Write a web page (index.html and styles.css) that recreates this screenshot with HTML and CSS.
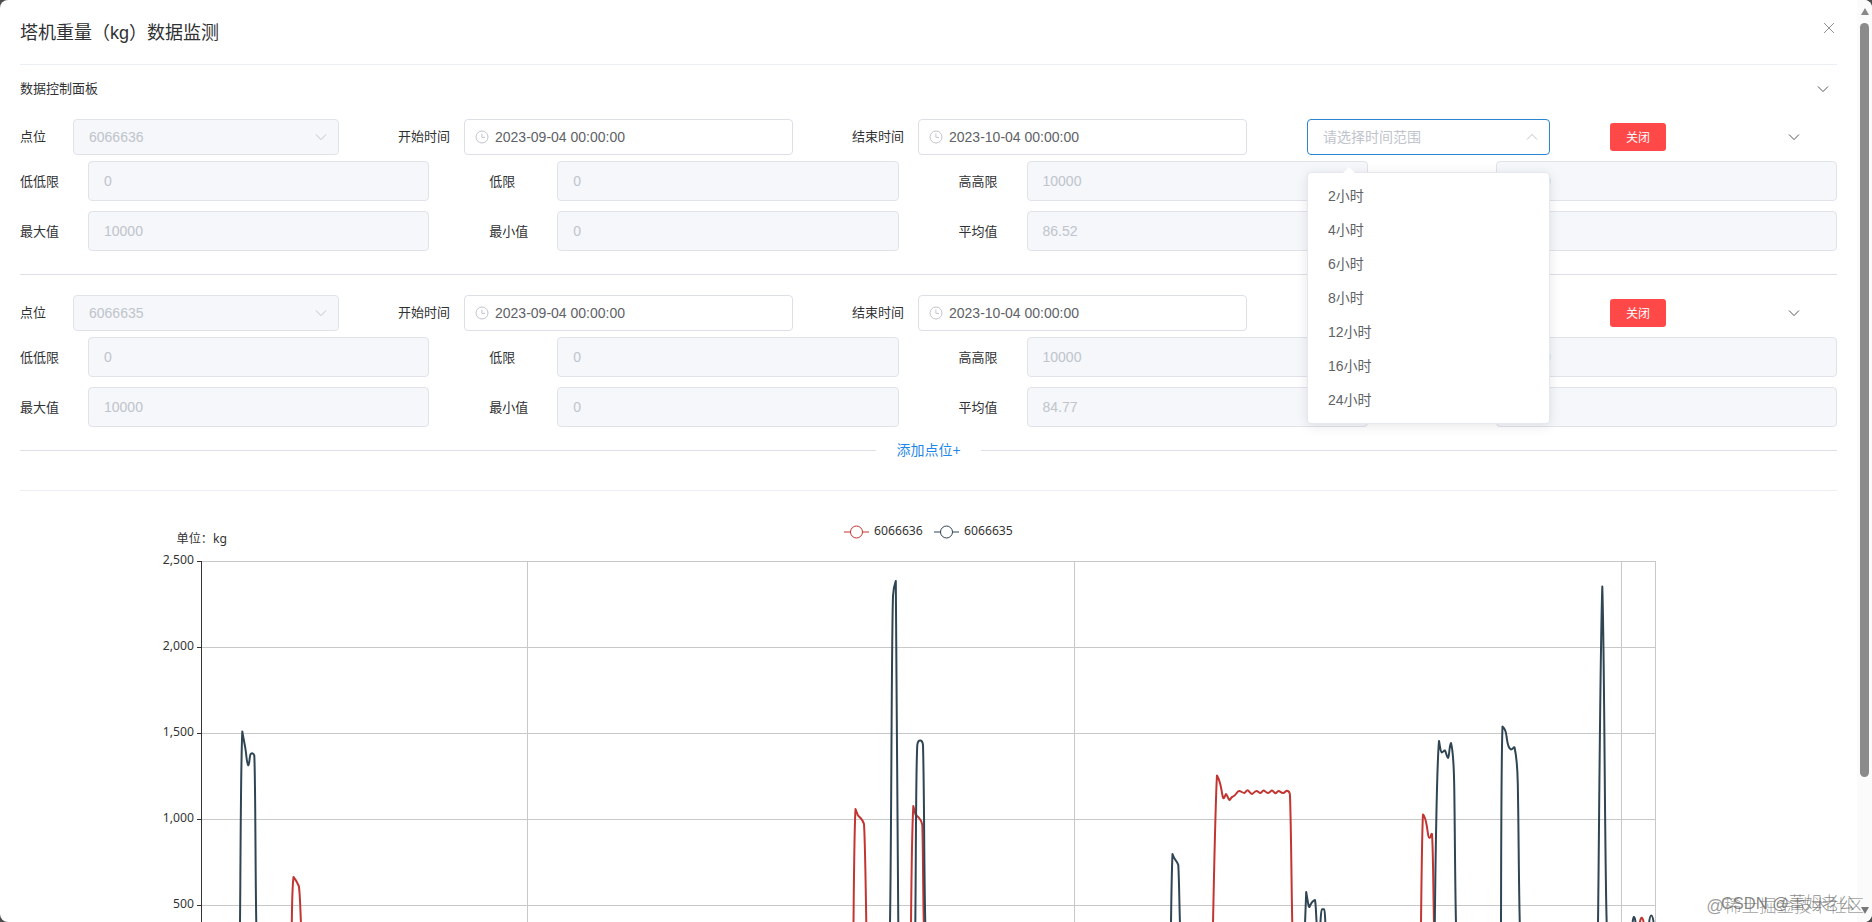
FILE: index.html
```html
<!DOCTYPE html>
<html lang="zh-CN">
  <head>
    <meta charset="UTF-8" />
    <title>塔机重量（kg）数据监测</title>
    <link rel="stylesheet" href="styles.css">
  </head>
  <body>
    <svg class="icon-defs" aria-hidden="true">
      <symbol id="arrow" viewBox="0 0 12 12"><path d="M1 3.5 L6 8.6 L11 3.5" /></symbol>
      <symbol id="clock" viewBox="0 0 14 14"><circle cx="7" cy="7" r="6" /><path d="M6.9 3.6 V7.4 H10" /></symbol>
      <symbol id="close" viewBox="0 0 12 12"><path d="M1 1 L11 11 M11 1 L1 11" /></symbol>
    </svg>
    <div class="dialog">
      <header class="dialog-header">
        <h1 class="dialog-title">塔机重量（kg）数据监测</h1>
        <svg class="icon icon-close"><use href="#close" /></svg>
      </header>

      <div class="panel-header">
        <span>数据控制面板</span>
        <svg class="icon icon-dark"><use href="#arrow" /></svg>
      </div>

      <section class="point">
        <div class="point-row">
          <label class="label-point">点位</label>
          <div class="field select-point disabled"><span>6066636</span><svg class="icon"><use href="#arrow" /></svg></div>
          <label class="label-time">开始时间</label>
          <div class="field date"><svg class="icon icon-clock"><use href="#clock" /></svg><span>2023-09-04 00:00:00</span></div>
          <label class="label-time">结束时间</label>
          <div class="field date"><svg class="icon icon-clock"><use href="#clock" /></svg><span>2023-10-04 00:00:00</span></div>
          <div class="range">
            <div class="field select-range active"><span>请选择时间范围</span><svg class="icon icon-up"><use href="#arrow" /></svg></div>
            <ul class="dropdown">
              <li>2小时</li>
              <li>4小时</li>
              <li>6小时</li>
              <li>8小时</li>
              <li>12小时</li>
              <li>16小时</li>
              <li>24小时</li>
            </ul>
          </div>
          <button type="button" class="btn-danger">关闭</button>
          <svg class="icon icon-dark icon-fold"><use href="#arrow" /></svg>
        </div>
        <div class="limits">
          <div class="limit"><label>低低限</label><div class="field disabled">0</div></div>
          <div class="limit"><label>低限</label><div class="field disabled">0</div></div>
          <div class="limit"><label>高高限</label><div class="field disabled">10000</div></div>
          <div class="limit"><label></label><div class="field disabled">10000</div></div>
          <div class="limit"><label>最大值</label><div class="field disabled">10000</div></div>
          <div class="limit"><label>最小值</label><div class="field disabled">0</div></div>
          <div class="limit"><label>平均值</label><div class="field disabled">86.52</div></div>
          <div class="limit"><label></label><div class="field disabled"></div></div>
        </div>
      </section>

      <div class="divider"></div>

      <section class="point">
        <div class="point-row">
          <label class="label-point">点位</label>
          <div class="field select-point disabled"><span>6066635</span><svg class="icon"><use href="#arrow" /></svg></div>
          <label class="label-time">开始时间</label>
          <div class="field date"><svg class="icon icon-clock"><use href="#clock" /></svg><span>2023-09-04 00:00:00</span></div>
          <label class="label-time">结束时间</label>
          <div class="field date"><svg class="icon icon-clock"><use href="#clock" /></svg><span>2023-10-04 00:00:00</span></div>
          <div class="range"></div>
          <button type="button" class="btn-danger">关闭</button>
          <svg class="icon icon-dark icon-fold"><use href="#arrow" /></svg>
        </div>
        <div class="limits">
          <div class="limit"><label>低低限</label><div class="field disabled">0</div></div>
          <div class="limit"><label>低限</label><div class="field disabled">0</div></div>
          <div class="limit"><label>高高限</label><div class="field disabled">10000</div></div>
          <div class="limit"><label></label><div class="field disabled">10000</div></div>
          <div class="limit"><label>最大值</label><div class="field disabled">10000</div></div>
          <div class="limit"><label>最小值</label><div class="field disabled">0</div></div>
          <div class="limit"><label>平均值</label><div class="field disabled">84.77</div></div>
          <div class="limit"><label></label><div class="field disabled"></div></div>
        </div>
      </section>

      <div class="add-point"><span>添加点位+</span></div>

      <svg class="chart" viewBox="20 491 1817 431">
        <!-- legend -->
        <g class="legend">
          <path class="red" d="M844 532 h25" />
          <circle class="red" cx="856.5" cy="532" r="6" />
          <text x="874" y="535">6066636</text>
          <path class="dark" d="M934 532 h25" />
          <circle class="dark" cx="946.5" cy="532" r="6" />
          <text x="964" y="535">6066635</text>
        </g>
        <text x="176.5" y="543">单位：kg</text>

        <!-- grid -->
        <path class="grid" d="M202 561.5 H1656 M202 647.5 H1656 M202 733.5 H1656 M202 819.5 H1656 M202 905.5 H1656" />
        <path class="grid" d="M527.5 561 V922 M1074.5 561 V922 M1621.5 561 V922 M1655.5 561 V922" />
        <path class="axis" d="M201.5 561 V922 M197 561.5 h5 M197 647.5 h5 M197 733.5 h5 M197 819.5 h5 M197 905.5 h5" />
        <g class="ticks">
          <text x="194" y="564">2,500</text>
          <text x="194" y="650">2,000</text>
          <text x="194" y="736">1,500</text>
          <text x="194" y="822">1,000</text>
          <text x="194" y="908">500</text>
        </g>

        <!-- 6066636 -->
        <g class="line red">
          <path d="M291.8 924 C292 905 292.5 885 293.5 877 C296 880 297.5 883 298.8 886 C300 892 300.3 910 301 924" />
          <path d="M853.5 924 C854 870 854.3 830 855.5 809 L858 815.5 C861 818 863 820 864 824 C865 840 865.8 890 866.3 924" />
          <path d="M911 924 C911.5 870 912 830 913.3 806 L915.5 814.5 C918 817 921 818 922.3 825 C923 840 923 890 923.8 924" />
          <path d="M1213 924 C1214.3 860 1215.5 800 1217 775.5 C1219 779 1220.5 784 1221.5 790 C1222.5 796 1223 799 1224 798 L1226 794 C1227 794 1228 799 1229.5 800 C1231 799 1231 797 1233 796.5 C1236 795.5 1237 791 1239 791 C1241 791 1242.5 793 1244.5 793 C1246 792 1246.5 790.3 1247.5 790.3 C1249 790.3 1250 794 1252 794 C1254 793 1255 791 1256.5 791 C1258 791 1259 793 1260.5 793 C1262 793 1262 790.5 1263.5 790.5 C1265 790.5 1266 793 1268 793 C1270 793 1270.5 790.5 1272 790.5 C1273.5 790.5 1274 793.5 1275.5 793.3 C1277 793 1277 791 1278.5 791 C1280 791 1281 793 1283 793 C1285 793 1285.5 790.5 1287 790.7 C1289 791 1290 793 1290 796 C1291.2 830 1291.5 890 1292.3 924" />
          <path d="M1421 924 C1421.5 880 1422 830 1423 814.5 C1425 816 1426 821 1427 827 C1428 834 1428.5 838 1429.5 838 C1431 838 1431 833 1432 834 C1433.2 850 1433.2 890 1434 924" />
          <path d="M1639.5 924 C1640.5 918.5 1641.5 917 1642.2 918 C1643 919 1643.5 921 1644 924" />
        </g>
        <!-- 6066635 -->
        <g class="line dark">
          <path d="M240 924 C240.7 850 240.7 765 242.3 731.5 C243.3 739 245 744 246 753 C246.7 760 247.6 764.5 248.3 765.3 C249.6 765 249.3 756 250.7 754 C251.8 753 253.6 753 254.3 755.5 C255.5 780 255.3 870 256.3 924" />
          <path d="M890 924 C891.5 830 891.5 640 893 596 C893.5 587 894.8 584 895.8 581 C897.3 640 896.8 840 898.3 924" />
          <path d="M915.3 924 C916 860 915.8 770 917.3 745 C918 739 922.3 739 923 745 C924.3 790 924 870 925.3 924" />
          <path d="M1171 924 C1171.3 900 1171.8 870 1172.5 854 C1174.5 861 1177 860 1178.3 865 C1179.3 885 1179.3 905 1180 924" />
          <path d="M1305 924 L1306.2 892 C1307.5 899 1308.5 908 1309.5 907 C1311 903 1312 901 1315 900 C1316 905 1316 915 1316.7 924 M1320.3 924 C1321 916 1321 909.5 1322 909.3 H1324 C1325 910 1325 917 1325.4 924" />
          <path d="M1434.8 924 C1435.5 860 1436.5 770 1439 741 C1440 746 1440.5 752 1441.8 752.5 C1443 752.5 1444 750 1445 750.5 C1446 752 1447 758 1448 758 C1449.5 757 1449 746 1451 743 C1453.5 752 1454 770 1454.3 790 C1455 840 1455 880 1456 924" />
          <path d="M1501 924 C1501.2 860 1501.2 760 1502.5 726.5 C1504.5 728 1506 731 1506.6 737 C1507.5 744 1509 749 1511 749.5 C1513 749.5 1513.5 746.5 1514.5 747.3 C1516 754 1517.5 768 1517.8 784 C1518.7 830 1518.7 880 1519.8 924" />
          <path d="M1598 924 C1599 850 1600 660 1602.3 586.5 C1604.6 660 1604.6 850 1606.7 924" />
          <path d="M1632.5 924 C1633 917 1634 915 1635 919 L1635.8 924 M1649 924 C1650 912.5 1652.5 912.5 1653.8 924" />
        </g>
      </svg>

      <div class="scrollbar"><i class="scroll-up"></i><i class="scroll-thumb"></i><i class="scroll-down"></i></div>
      <div class="watermark watermark-back">@稀土掘金技术社区</div>
      <div class="watermark watermark-front">CSDN @蕾姆老公</div>
    </div>
  </body>
</html>
```
FILE: styles.css
```css
:root {
  --primary: #1f87e8;
  --danger: #ff4949;
  --text: #303133;
  --text-regular: #606266;
  --placeholder: #c0c4cc;
  --border: #dcdfe6;
  --border-light: #ebeef5;
  --disabled-bg: #f5f7fa;
}

* {
  box-sizing: border-box;
}

body {
  margin: 0;
  height: 922px;
  overflow: hidden;
  background: #4d4d4d;
  color: var(--text);
  font-family: "Liberation Sans", "Noto Sans CJK SC", sans-serif;
  font-size: 13px;
}

.icon-defs {
  display: none;
}

.dialog {
  position: relative;
  height: 922px;
  padding: 0 35px 0 20px;
  overflow: hidden;
  background: #fff;
  border-radius: 8px;
}

.dialog-header {
  display: flex;
  justify-content: space-between;
  align-items: center;
  height: 65px;
  padding-right: 2px;
  border-bottom: 1px solid var(--border-light);
}

.dialog-title {
  margin: 0;
  padding-bottom: 3px;
  font-size: 18px;
  font-weight: 400;
}

.icon {
  width: 12px;
  height: 12px;
  flex: none;
  fill: none;
  stroke: var(--placeholder);
  stroke-width: 1;
}

.icon-close {
  margin-bottom: 9px;
  stroke: #909399;
}

.icon-dark {
  stroke: #55575b;
}

.icon-up {
  transform: rotate(180deg);
}

.icon-clock {
  width: 14px;
  height: 14px;
  margin-right: 6px;
}

.panel-header {
  display: flex;
  justify-content: space-between;
  align-items: center;
  height: 48px;
  padding-right: 8px;
}

.panel-header span {
  padding-bottom: 4px;
}

.point {
  padding-top: 6px;
}

.point-row {
  display: flex;
  align-items: center;
  height: 36px;
}

.point-row label {
  padding-bottom: 4px;
}

.label-point {
  width: 53px;
}

.label-time {
  width: 66px;
  margin-left: 59px;
}

.field {
  display: flex;
  align-items: center;
  height: 36px;
  padding: 0 15px;
  border: 1px solid var(--border);
  border-radius: 4px;
  color: var(--text-regular);
  font-size: 14px;
}

.disabled {
  background: var(--disabled-bg);
  border-color: #e0e3ea;
  color: var(--placeholder);
}

.select-point,
.select-range {
  justify-content: space-between;
  padding-right: 11px;
}

.select-point {
  width: 266px;
}

.date {
  width: 329px;
  padding: 0 10px;
}

.range {
  position: relative;
  width: 243px;
  margin-left: 60px;
}

.active {
  border-color: #2b85d0;
  color: var(--placeholder);
}

.active span {
  padding-bottom: 2px;
}

.dropdown {
  position: absolute;
  top: 53px;
  left: 0;
  z-index: 10;
  width: 243px;
  margin: 0;
  padding: 6px 0;
  list-style: none;
  background: #fff;
  border: 1px solid #e4e7ed;
  border-radius: 4px;
  box-shadow: 0 2px 12px rgba(0, 0, 0, 0.1);
  color: var(--text-regular);
  font-size: 14px;
}

.dropdown::before {
  content: "";
  position: absolute;
  top: -6px;
  left: 35px;
  border: 6px solid transparent;
  border-top: 0;
  border-bottom-color: #fff;
}

.dropdown li {
  height: 34px;
  padding: 0 20px;
  line-height: 34px;
}

.btn-danger {
  width: 56px;
  height: 28px;
  margin-left: 60px;
  padding: 0 0 2px;
  border: 0;
  border-radius: 3px;
  background: var(--danger);
  color: #fff;
  font-family: inherit;
  font-size: 12px;
}

.icon-fold {
  margin-left: 122px;
}

.limits {
  display: grid;
  grid-template-columns: repeat(4, 1fr);
  gap: 10px 60px;
  margin-top: 6px;
}

.limit {
  display: flex;
  align-items: center;
}

.limit label {
  width: 68px;
  padding-bottom: 2px;
}

.limit .field {
  flex: 1;
  height: 40px;
}

.divider {
  height: 1px;
  margin: 23px 0 14px;
  background: var(--border);
}

.add-point {
  display: flex;
  align-items: center;
  height: 64px;
  padding-bottom: 17px;
  border-bottom: 1px solid var(--border-light);
  color: var(--primary);
  font-size: 14px;
}

.add-point::before,
.add-point::after {
  content: "";
  flex: 1;
  height: 1px;
  background: var(--border);
}

.add-point span {
  padding: 0 20px 2px;
}

.chart {
  display: block;
  width: 1817px;
  height: 431px;
}

.chart text {
  fill: #333;
  font-family: "Noto Sans", "Noto Sans CJK SC", sans-serif;
  font-size: 12.2px;
}

.ticks {
  text-anchor: end;
}

.grid {
  stroke: #c8c8c8;
}

.axis {
  stroke: #333;
}

.line {
  fill: none;
  stroke-width: 2;
  stroke-linejoin: round;
}

.red {
  stroke: #c23531;
}

.dark {
  stroke: #2f4554;
}

.legend circle {
  fill: #fff;
}

.scrollbar {
  position: absolute;
  top: 0;
  right: 0;
  display: flex;
  flex-direction: column;
  align-items: center;
  width: 15px;
  height: 922px;
  background: #fbfbfb;
}

.scroll-up,
.scroll-down {
  border: 4.5px solid transparent;
}

.scroll-up {
  margin-top: 8px;
  border-top: 0;
  border-bottom: 7px solid #888;
}

.scroll-thumb {
  width: 9px;
  height: 754px;
  margin-top: 8px;
  border-radius: 5px;
  background: #8b8b8b;
}

.scroll-down {
  margin-top: 130px;
  border-bottom: 0;
  border-top: 7px solid #777;
}

.watermark {
  position: absolute;
  color: rgba(125, 125, 125, 0.75);
  font-family: "Liberation Sans", "Noto Sans CJK SC", sans-serif;
  font-weight: 300;
  line-height: 24px;
  white-space: nowrap;
}

.watermark-back {
  right: 8px;
  bottom: 4px;
  font-size: 17.5px;
}

.watermark-front {
  right: 17px;
  bottom: 7px;
  color: rgba(95, 95, 95, 0.75);
  font-size: 16.5px;
}
```
